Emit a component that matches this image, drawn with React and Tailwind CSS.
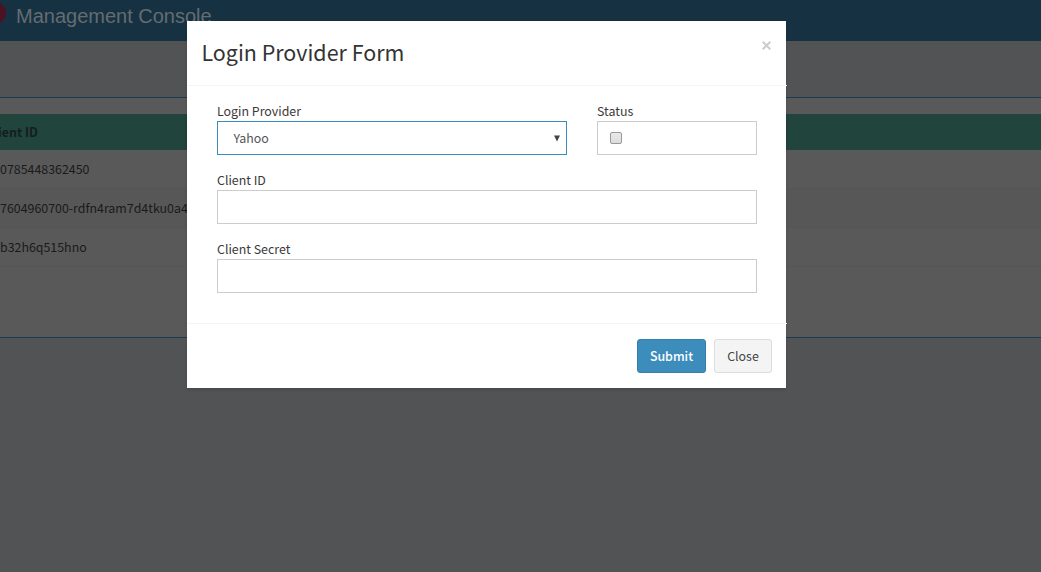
import React from "react";

const rows = [
  { id: "0785448362450", shade: "bg-[#595959]" },
  { id: "7604960700-rdfn4ram7d4tku0a4", shade: "bg-[#575757]" },
  { id: "b32h6q515hno", shade: "bg-[#595959]" },
];

function Label({ children }) {
  return <div className="h-[20px] whitespace-nowrap text-[12.4px] leading-[20px] text-[#3a3a3a]">{children}</div>;
}

function Page() {
  return (
    <div className="flex h-[572px] w-full flex-col bg-[#525355]">
      <header className="flex h-[41px] shrink-0 items-start bg-[#163242]">
        <svg className="h-[30px] w-[16px] shrink-0" viewBox="0 0 16 30">
          <circle cx="-5" cy="13" r="11" fill="#4b1226" />
        </svg>
        <span className="whitespace-nowrap font-['Liberation_Sans',sans-serif] text-[20px] leading-[32px] text-[#646c71]">
          Management Console
        </span>
      </header>
      <div className="h-[56px] shrink-0" />
      <section className="h-[241px] shrink-0 border-y border-[#1a3a52] bg-[#595959] pt-[16px]">
        <div className="flex h-[36px] items-center bg-[#21443d] text-[12.4px] font-bold text-[#121f1c]">
          <span className="-ml-[2px]">ient ID</span>
        </div>
        {rows.map((r) => (
          <div key={r.id} className={"flex h-[39px] items-center border-b border-[#555] text-[12.4px] text-[#1a1a1a] " + r.shade}>
            {r.id}
          </div>
        ))}
      </section>
    </div>
  );
}

export default function App() {
  return (
    <div className="relative h-[572px] w-full overflow-hidden font-['Noto_Sans_CJK_SC',sans-serif]">
      <Page />
      <div className="absolute left-[187px] top-[21px] flex h-[367px] w-[599px] flex-col bg-white shadow-[0_2px_3px_rgba(0,0,0,0.125)]">
        <div className="flex h-[65px] w-[600px] items-start justify-between border-b border-[#f4f4f4] px-[15px]">
          <h4 className="-ml-[0.5px] whitespace-nowrap pt-[14px] text-[21.45px] leading-[34px] text-[#333]">Login Provider Form</h4>
          <svg className="mt-[20px] mr-[1.5px] h-[9px] w-[9px]" viewBox="0 0 9 9" stroke="#ccc" strokeWidth="2">
            <path d="M0.7 0.7L8.3 8.3M8.3 0.7L0.7 8.3" />
          </svg>
        </div>
        <div className="flex h-[237px] w-[600px] flex-col gap-[15px] px-[30px] pt-[15px]">
          <div className="flex gap-[30px]">
            <div className="w-[350px]">
              <Label>Login Provider</Label>
              <div className="flex h-[34px] items-center justify-between border border-[#3c8dbc] pr-[6px] pl-[15.5px] text-[12.4px] text-[#555]">
                Yahoo
                <svg className="h-[7px] w-[6px]" viewBox="0 0 6 7" fill="#444">
                  <path d="M0 0.5H6L3 6.5Z" />
                </svg>
              </div>
            </div>
            <div className="w-[160px]">
              <Label>Status</Label>
              <div className="flex h-[34px] items-center border border-[#ccc] pl-[12px]">
                <span className="h-[12px] w-[12px] rounded-[2px] border border-[#999] bg-linear-to-b from-[#e9e9e9] to-[#dcdcdc]" />
              </div>
            </div>
          </div>
          <div>
            <Label>Client ID</Label>
            <div className="h-[34px] border border-[#ccc]" />
          </div>
          <div>
            <Label>Client Secret</Label>
            <div className="h-[34px] border border-[#ccc]" />
          </div>
        </div>
        <div className="flex h-[65px] w-[600px] justify-end gap-[8px] border-t border-[#f4f4f4] pt-[15px] pr-[15px]">
          <button className="h-[34px] w-[69px] rounded-[3px] border border-[#367fa9] bg-[#3c8dbc] text-[12.4px] font-medium text-white">Submit</button>
          <button className="h-[34px] w-[58px] rounded-[3px] border border-[#ddd] bg-[#f4f4f4] text-[12.4px] text-[#444]">Close</button>
        </div>
      </div>
    </div>
  );
}
